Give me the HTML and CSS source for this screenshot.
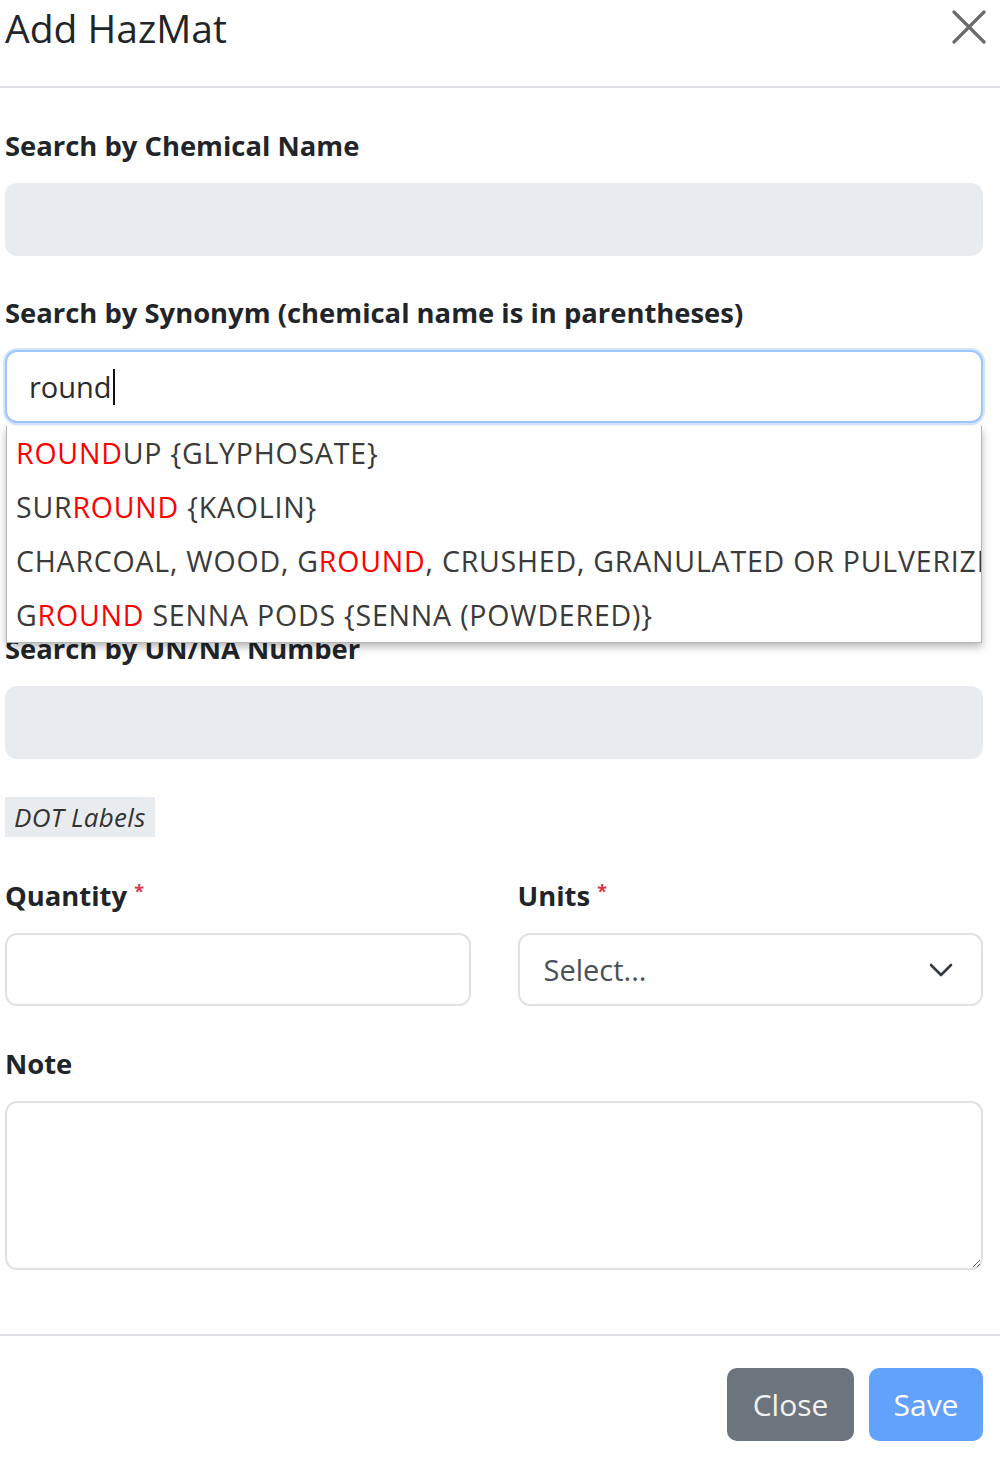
FILE: index.html
```html
<!DOCTYPE html>
<html>
<head>
<meta charset="utf-8">
<link rel="stylesheet" href="styles.css">
</head>
<body>
<div class="modal">
  <header class="modal-header">
    <h5 class="modal-title">Add HazMat</h5>
    <button class="btn-close" aria-label="Close">
      <svg width="34" height="34" viewBox="0 0 34 34"><path d="M2 2 L32 32 M32 2 L2 32" stroke="#6b6b6b" stroke-width="3.2" stroke-linecap="round" fill="none"/></svg>
    </button>
  </header>
  <div class="modal-body">
    <div class="group g1">
      <label class="lbl">Search by Chemical Name</label>
      <div class="field disabled"></div>
    </div>
    <div class="group g2">
      <label class="lbl">Search by Synonym (chemical name is in parentheses)</label>
      <div class="combo">
        <div class="field focus"><span class="typed">round</span><span class="caret"></span></div>
        <ul class="menu">
          <li><span class="hl">ROUND</span>UP {GLYPHOSATE}</li>
          <li>SUR<span class="hl">ROUND</span> {KAOLIN}</li>
          <li>CHARCOAL, WOOD, G<span class="hl">ROUND</span>, CRUSHED, GRANULATED OR PULVERIZED</li>
          <li>G<span class="hl">ROUND</span> SENNA PODS {SENNA (POWDERED)}</li>
        </ul>
      </div>
    </div>
    <div class="group g3">
      <label class="lbl">Search by UN/NA Number</label>
      <div class="field disabled"></div>
    </div>
    <div class="badge-row"><span class="badge">DOT Labels</span></div>
    <div class="row2">
      <div class="group">
        <label class="lbl">Quantity <span class="req">*</span></label>
        <div class="field"></div>
      </div>
      <div class="group">
        <label class="lbl">Units <span class="req">*</span></label>
        <div class="field select"><span class="ph">Select...</span>
          <svg class="chev" width="24" height="14" viewBox="0 0 24 14"><path d="M2 2 L12 12 L22 2" stroke="#343a40" stroke-width="2.6" fill="none" stroke-linecap="round" stroke-linejoin="round"/></svg>
        </div>
      </div>
    </div>
    <div class="group g5">
      <label class="lbl">Note</label>
      <textarea class="note"></textarea>
    </div>
  </div>
  <footer class="modal-footer">
    <button class="btn btn-secondary">Close</button>
    <button class="btn btn-primary">Save</button>
  </footer>
</div>
</body>
</html>
```
FILE: styles.css
```css
* { box-sizing: border-box; }
html, body { margin: 0; padding: 0; background: #fff; }
body { font-family: "Open Sans", "Noto Sans", sans-serif; color: #212529; }
.modal { width: 1000px; }
.modal-header {
  height: 88px;
  border-bottom: 2px solid #dee2e6;
  display: flex;
  justify-content: space-between;
  align-items: flex-start;
  padding: 0 14px 0 5px;
}
.modal-title {
  margin: 0;
  font-size: 39px;
  font-weight: 400;
  line-height: 56px;
  color: #212529;
  letter-spacing: 0;
}
.btn-close {
  border: 0;
  background: transparent;
  padding: 0;
  margin-top: 10px;
  width: 34px;
  height: 34px;
}
.btn-close svg { display: block; }
.modal-body { padding: 38px 17px 0 5px; }
.lbl {
  display: block;
  font-size: 27.4px;
  font-weight: 700;
  line-height: 40px;
  margin-bottom: 17px;
  color: #212529;
}
.group { margin-bottom: 37px; }
.g2 { margin-bottom: 206px; }
.g3 { margin-bottom: 38px; }
.field {
  height: 73px;
  border: 2px solid #dee2e6;
  border-radius: 12px;
  background: #fff;
  display: flex;
  align-items: center;
  padding: 0 22px;
  font-size: 29px;
}
.field.disabled { background: #e9ecef; border-color: #e9ecef; }
.field.focus {
  border-color: #9ec5fe;
  box-shadow: 0 0 0 2px rgba(13, 110, 253, 0.18);
}
.typed { color: #2b2b2b; }
.caret { display: inline-block; width: 2px; height: 36px; background: #111; margin-left: 1px; }
.combo { position: relative; }
.menu {
  position: absolute;
  top: calc(100% + 3px);
  left: 1px;
  right: 1px;
  margin: 0;
  padding: 0;
  list-style: none;
  background: #fff;
  border: 1px solid #b5b5b5;
  border-top: 0;
  box-shadow: 0 4px 8px rgba(0, 0, 0, 0.28);
  z-index: 5;
  overflow: hidden;
}
.menu li {
  height: 54px;
  line-height: 54px;
  padding-left: 9px;
  font-size: 28.5px;
  color: #3a3a3a;
  white-space: nowrap;
  letter-spacing: 0.8px;
}
.hl { color: #ff0000; }
.badge-row { margin-bottom: 34px; }
.badge {
  display: inline-block;
  background: #e9ecef;
  font-style: italic;
  font-size: 26px;
  line-height: 40px;
  padding: 0 9px;
  color: #333;
  letter-spacing: 0.3px;
}
.req { color: #dc3545; font-size: 18px; vertical-align: 8px; margin-left: 0; }
.row2 {
  display: grid;
  grid-template-columns: 1fr 1fr;
  column-gap: 47px;
}
.row2 .group { margin-bottom: 38px; }
.select { justify-content: space-between; padding: 0 28px 0 24px; }
.ph { color: #495057; }
.chev { display: block; }
.note {
  display: block;
  width: 100%;
  height: 169px;
  border: 2px solid #dee2e6;
  border-radius: 12px;
  resize: vertical;
  font: inherit;
  margin: 0;
}
.g5 { margin-bottom: 64px; }
.modal-footer {
  border-top: 2px solid #dee2e6;
  display: flex;
  justify-content: flex-end;
  gap: 15px;
  padding: 32px 17px 0 0;
  height: 130px;
}
.btn {
  height: 73px;
  border: 0;
  border-radius: 10px;
  font-family: inherit;
  font-size: 30px;
  color: #fff;
  padding: 0 24px;
}
.btn-secondary { background: #6c757d; width: 127px; color: #f2f2f2; }
.btn-primary { background: #62a2fd; width: 114px; }
```
